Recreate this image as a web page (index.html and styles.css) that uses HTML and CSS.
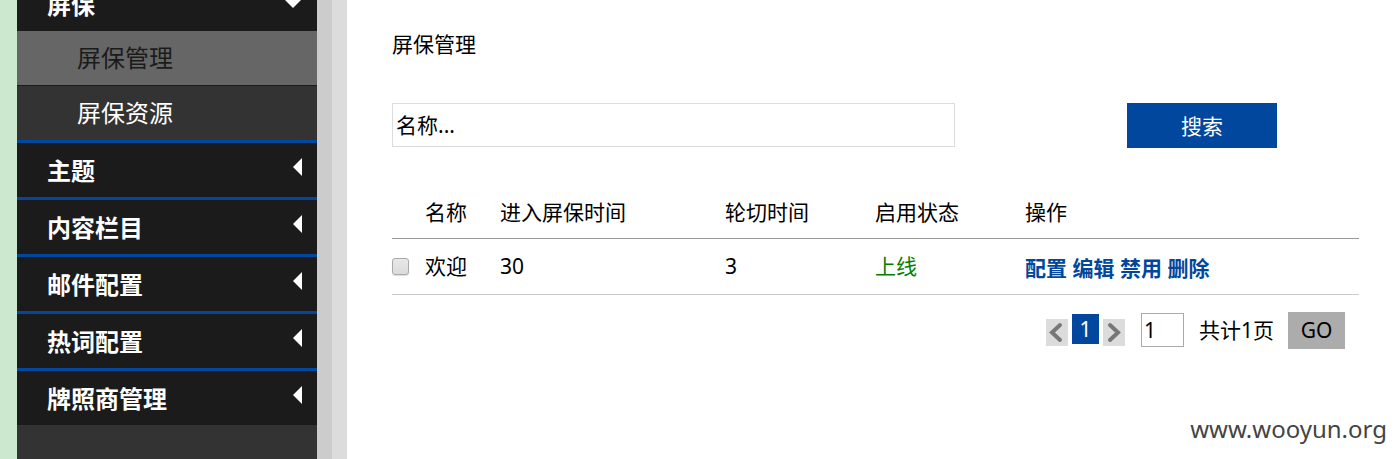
FILE: index.html
```html
<!DOCTYPE html>
<html lang="zh-CN">
<head>
<meta charset="utf-8">
<title>屏保管理</title>
<link rel="stylesheet" href="styles.css">
</head>
<body>
<div class="layout">
  <nav class="sidebar">
    <ul class="menu">
      <li class="menu-group">
        <a class="menu-title" href="#">屏保<svg class="arrow arrow-open" viewBox="0 0 18 9"><path d="M0 0H18L9 9Z"/></svg></a>
        <ul class="submenu">
          <li><a class="submenu-link is-active" href="#">屏保管理</a></li>
          <li><a class="submenu-link" href="#">屏保资源</a></li>
        </ul>
      </li>
      <li class="menu-group"><a class="menu-title" href="#">主题<svg class="arrow" viewBox="0 0 9 18"><path d="M9 0V18L0 9Z"/></svg></a></li>
      <li class="menu-group"><a class="menu-title" href="#">内容栏目<svg class="arrow" viewBox="0 0 9 18"><path d="M9 0V18L0 9Z"/></svg></a></li>
      <li class="menu-group"><a class="menu-title" href="#">邮件配置<svg class="arrow" viewBox="0 0 9 18"><path d="M9 0V18L0 9Z"/></svg></a></li>
      <li class="menu-group"><a class="menu-title" href="#">热词配置<svg class="arrow" viewBox="0 0 9 18"><path d="M9 0V18L0 9Z"/></svg></a></li>
      <li class="menu-group"><a class="menu-title" href="#">牌照商管理<svg class="arrow" viewBox="0 0 9 18"><path d="M9 0V18L0 9Z"/></svg></a></li>
    </ul>
  </nav>
  <main class="content">
    <h1 class="page-title">屏保管理</h1>
    <form class="search">
      <input class="search-input" type="text" value="名称..." aria-label="名称">
      <button class="search-button" type="button">搜索</button>
    </form>
    <table class="list">
      <colgroup><col class="col-check"><col class="col-name"><col class="col-enter"><col class="col-mid"><col class="col-mid"><col></colgroup>
      <thead>
        <tr><th></th><th>名称</th><th>进入屏保时间</th><th>轮切时间</th><th>启用状态</th><th>操作</th></tr>
      </thead>
      <tbody>
        <tr>
          <td><input class="check" type="checkbox" aria-label="选择 欢迎"></td>
          <td>欢迎</td><td>30</td><td>3</td>
          <td class="online">上线</td>
          <td class="actions"><a href="#">配置</a> <a href="#">编辑</a> <a href="#">禁用</a> <a href="#">删除</a></td>
        </tr>
      </tbody>
    </table>
    <div class="pager">
      <div class="pages">
        <button class="step" type="button" aria-label="上一页"><svg viewBox="0 0 22 27"><path d="M14 6L6 13.500L14 21"/></svg></button>
        <a class="current" href="#">1</a>
        <button class="step" type="button" aria-label="下一页"><svg viewBox="0 0 22 27"><path d="M7 6L15 13.500L7 21"/></svg></button>
      </div>
      <input class="page-input" type="text" value="1" aria-label="页码">
      <span class="total">共计1页</span>
      <button class="go" type="button">GO</button>
    </div>
  </main>
</div>
<div class="watermark">www.wooyun.org</div>
</body>
</html>
```
FILE: styles.css
```css
* { box-sizing: border-box; }
body {
  margin: 0;
  overflow: hidden;
  background: #fff;
  color: #000;
  font: 21px/30px "Noto Sans", "Noto Sans CJK SC", sans-serif;
}
input, button { font: inherit; color: inherit; border-radius: 0; margin: 0; }
a { text-decoration: none; }
ul { list-style: none; margin: 0; padding: 0; }

.layout { display: flex; min-height: 100vh; }
.sidebar {
  flex: none;
  width: 332px;
  overflow: hidden;
  border-left: 17px solid #cce8cf;
  border-right: 15px solid #ccc;
  background: #333;
}
.menu { margin-top: -26px; }
.menu-group { border-top: 3px solid #00479d; }
.menu-title {
  display: flex;
  justify-content: space-between;
  height: 54px;
  padding: 0 15px 0 30px;
  background: #1b1b1b;
  color: #fff;
  font-size: 24px;
  font-weight: bold;
  line-height: 56px;
}
.arrow { width: 9px; height: 18px; margin-top: 15px; fill: #fff; }
.arrow-open { width: 18px; height: 9px; margin-top: 22px; }
.submenu-link {
  display: block;
  height: 54px;
  padding-left: 60px;
  color: #fff;
  font-size: 24px;
  line-height: 54px;
}
.submenu-link.is-active {
  height: 55px;
  border-bottom: 1px solid #1b1b1b;
  background: #666;
  color: #1b1b1b;
}

.content { flex: 1; min-width: 0; padding: 29px 36px 0 45px; border-left: 15px solid #dcdcdc; }
.page-title { margin: 0; font-size: 21px; font-weight: normal; }
.search {
  display: grid;
  grid-template-columns: 563fr 172fr 232fr;
  align-items: start;
  margin-top: 44px;
}
.search-input { width: 100%; height: 44px; padding: 0 3px 2px; border: 1px solid #dcdcdc; outline: 0; }
.search-button {
  grid-column: 3;
  width: 150px;
  height: 45px;
  padding: 0;
  border: 0;
  background: #00479d;
  color: #fff;
}

.list { width: 100%; margin-top: 38px; table-layout: fixed; border-collapse: collapse; }
.col-check { width: 33px; }
.col-name { width: 75px; }
.col-enter { width: 225px; }
.col-mid { width: 150px; }
.list th, .list td { padding: 0; text-align: left; font-weight: normal; }
.list th { height: 52px; border-bottom: 1px solid #999; }
.list td { height: 56px; border-bottom: 1px solid #ccc; }
.list .online { color: #008000; }
.list .actions { padding-top: 3px; font-weight: bold; }
.actions a { color: #00479d; }
.check {
  display: block;
  appearance: none;
  width: 17px;
  height: 17px;
  border: 1px solid #aaa;
  border-radius: 3px;
  background: linear-gradient(#e8e8e8, #dadada);
  box-shadow: 0 1px 1px #ddd;
}

.pager { display: flex; justify-content: flex-end; align-items: center; padding: 17px 14px 0 0; }
.pages { display: flex; align-items: flex-end; gap: 4px; margin-right: 16px; }
.step { width: 22px; height: 27px; padding: 0; border: 0; background: #dcdcdc; }
.step svg { display: block; fill: none; stroke: #777; stroke-width: 4; stroke-linecap: round; }
.current { width: 27px; margin-bottom: 2px; background: #00479d; color: #fff; text-align: center; }
.page-input { width: 43px; height: 34px; padding: 0 2px; border: 1px solid #aaa; }
.total { margin: 0 14px 0 15px; }
.go { width: 57px; height: 37px; padding: 0; border: 0; background: #acacac; }

.watermark { position: absolute; right: 8px; bottom: 12px; color: #444; font-size: 24px; line-height: 36px; }
```
